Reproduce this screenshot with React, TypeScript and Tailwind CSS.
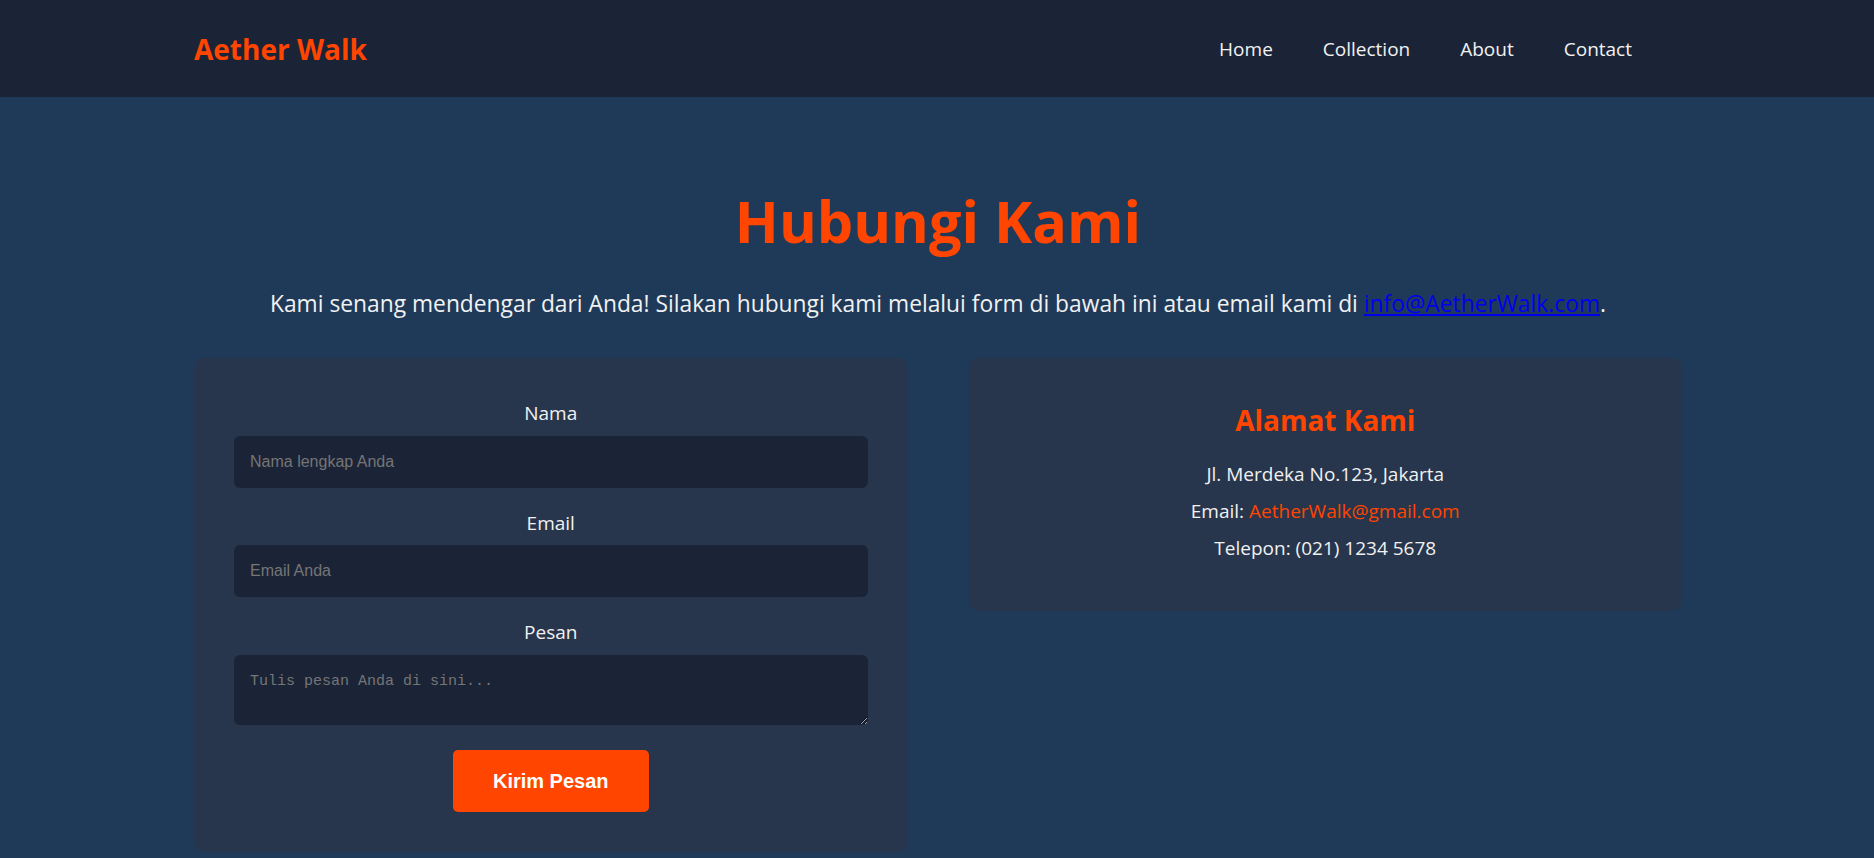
import { FormEvent } from "react"

const navLinks = ["Home", "Collection", "About", "Contact"]

const fields = [
  { id: "nama", label: "Nama", type: "text", placeholder: "Nama lengkap Anda" },
  { id: "email", label: "Email", type: "email", placeholder: "Email Anda" },
]

export default function App() {
  const onSubmit = (e: FormEvent) => e.preventDefault()

  return (
    <div className="min-h-screen bg-[#1f3a58] font-['Open_Sans',sans-serif] text-[#f1f1f1]">
      {/* header */}
      <header className="h-[97px] bg-[#1b2437]">
        <div className="ml-[194px] flex h-full w-[1488px] items-center justify-between">
          <a href="#" className="pt-[1px] text-[28px] font-bold text-[#ff4500]">Aether Walk</a>
          <nav className="flex gap-[50px] pr-[50px] pt-[1px]">
            {navLinks.map((l) => (
              <a key={l} href="#" className="text-[19px] text-[#f1f1f1]">{l}</a>
            ))}
          </nav>
        </div>
      </header>

      <main className="ml-[194px] w-[1488px] pt-[89px] pb-[40px]">
        <h1 className="text-center text-[57.6px] font-bold leading-[1.2] text-[#ff4500]">Hubungi Kami</h1>
        <p className="mt-[32px] text-center text-[22.8px] leading-[1.5]">
          Kami senang mendengar dari Anda! Silakan hubungi kami melalui form di bawah ini atau email kami di{" "}
          <a href="mailto:info@AetherWalk.com" className="text-[#0000ee] underline">info@AetherWalk.com</a>.
        </p>

        <div className="mt-[37px] grid grid-cols-2 items-start gap-[61px]">
          {/* form */}
          <form onSubmit={onSubmit} className="rounded-[10px] bg-[#27364c] px-10 pt-[41px] pb-[40px]">
            {fields.map((f) => (
              <div key={f.id} className="mb-[21px]">
                <label htmlFor={f.id} className="mb-2 block text-center text-[19px] leading-[1.5]">{f.label}</label>
                <input
                  id={f.id}
                  type={f.type}
                  placeholder={f.placeholder}
                  className="block h-[52px] w-full rounded-[6px] bg-[#1b2437] px-4 font-['Liberation_Sans',Arial,sans-serif] text-[16px] text-white outline-none placeholder:text-[#757575]"
                />
              </div>
            ))}
            <div className="mb-[25px]">
              <label htmlFor="pesan" className="mb-2 block text-center text-[19px] leading-[1.5]">Pesan</label>
              <textarea
                id="pesan"
                placeholder="Tulis pesan Anda di sini..."
                className="block h-[70px] w-full resize rounded-[6px] bg-[#1b2437] px-4 py-4 font-['Liberation_Mono',monospace] text-[15px] text-white outline-none placeholder:text-[#757575]"
              />
            </div>
            <div className="flex justify-center">
              <button type="submit" className="h-[62px] w-[196px] rounded-[5px] bg-[#ff4500] font-['Liberation_Sans',Arial,sans-serif] text-[20px] font-bold text-white">
                Kirim Pesan
              </button>
            </div>
          </form>

          {/* address */}
          <div className="rounded-[10px] bg-[#27364c] px-10 pt-[41px] pb-[44px] text-center">
            <h3 className="mb-[15px] text-[28px] font-bold leading-[1.5] text-[#ff4500]">Alamat Kami</h3>
            <p className="text-[19px] leading-[37px]">Jl. Merdeka No.123, Jakarta</p>
            <p className="text-[19px] leading-[37px]">
              Email: <a href="mailto:AetherWalk@gmail.com" className="text-[#ff4500]">AetherWalk@gmail.com</a>
            </p>
            <p className="text-[19px] leading-[37px]">Telepon: (021) 1234 5678</p>
          </div>
        </div>
      </main>
    </div>
  )
}
